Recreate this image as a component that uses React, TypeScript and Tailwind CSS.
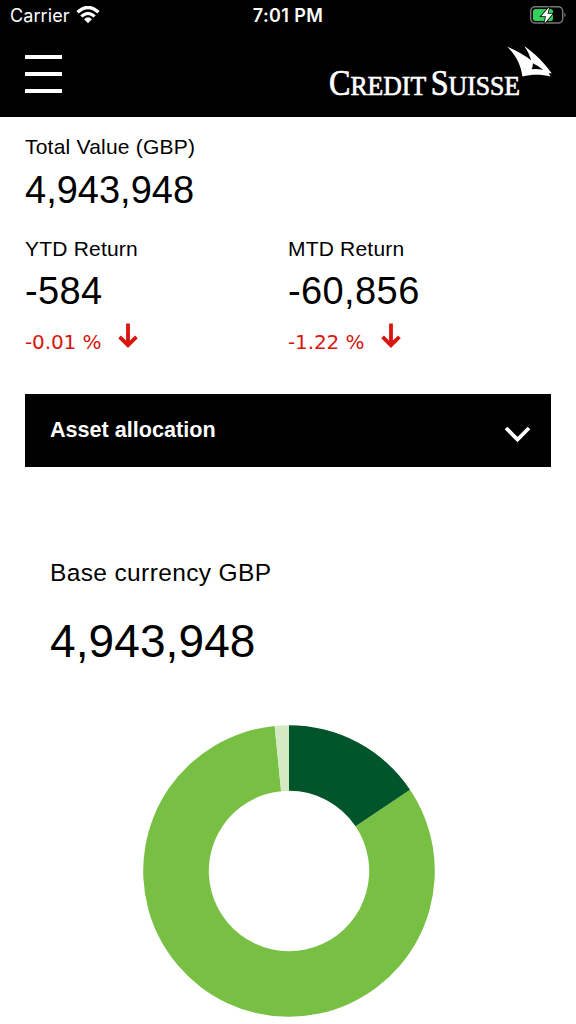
const SANS = "font-['Liberation_Sans',Arial,sans-serif]";

function StatusBar() {
  return (
    <div className="grid h-8 grid-cols-3 items-center font-['Inter',sans-serif] text-white">
      <div className="flex items-center gap-[6px] pl-[10px]">
        <span className="text-[18px] leading-8 tracking-[0.1px]">Carrier</span>
        <svg width="24" height="18" viewBox="0 0 24 18" fill="none" stroke="white" className="-mt-[2px]">
          <path d="M1.5 6.2 Q12 -3.3 22.5 6.2" strokeWidth="3.4" />
          <path d="M5.3 10.4 Q12 4.3 18.7 10.4" strokeWidth="3.2" />
          <path d="M8.1 13.3 Q12 9.4 15.9 13.3 L12 17.3 Z" fill="white" stroke="none" />
        </svg>
      </div>
      <span className="text-center text-[18px] leading-8 font-semibold tracking-[0.4px]">7:01 PM</span>
      <div className="flex justify-end pr-[9px]">
        <svg width="38" height="20" viewBox="0 0 38 20">
          <rect x="1.7" y="0.7" width="32" height="16.4" rx="4.5" fill="none" stroke="#777" strokeWidth="1.5" />
          <path d="M35.4 6.5 Q38 8.9 35.4 11.3 Z" fill="#777" />
          <rect x="4" y="3" width="20" height="12" rx="2.5" fill="#32d15b" />
          <path d="M20.2 0.9 L12.2 10.2 H17 L15.4 17.5 L23.6 7.8 H18.6 Z" fill="white" stroke="black" strokeWidth="1.6" paintOrder="stroke" />
        </svg>
      </div>
    </div>
  );
}

function Logo() {
  return (
    <svg
      width="228"
      height="60"
      viewBox="326 43 228 60"
      fill="white"
      className="overflow-visible font-['Liberation_Serif',serif]"
    >
      <text x="329" y="95" fontSize="28" textLength="191" lengthAdjust="spacingAndGlyphs" stroke="white" strokeWidth="0.7">
        <tspan fontSize="35">C</tspan>
        <tspan>REDIT</tspan>
        <tspan fontSize="35" dx="5">S</tspan>
        <tspan>UISSE</tspan>
      </text>
      <path
        fillRule="evenodd"
        d="M507 46.5 Q521 52.5 531.2 60.2 Q529.2 53 524.3 46 C535 53.5 545.5 64 551.8 73.6 L548.6 73 L550.6 76.6 C541 74.2 532 74.2 522.4 76.6 C521 65 516 55 507 46.5 Z M532.8 63.2 Q533 66.6 531.6 69.3 Q537.5 68.7 543.2 69.9 Q539 66 532.8 63.2 Z"
      />
    </svg>
  );
}

function Header() {
  return (
    <header className="h-[116.5px] bg-black">
      <StatusBar />
      <div className="flex justify-between pt-[11px] pr-[22px] pl-[24.5px]">
        <button aria-label="Menu" className="mt-[12px] flex h-[38px] w-[37.5px] flex-col justify-between">
          <span className="h-[4px] w-full bg-white" />
          <span className="h-[4px] w-full bg-white" />
          <span className="h-[4px] w-full bg-white" />
        </button>
        <Logo />
      </div>
    </header>
  );
}

function DownArrow() {
  return (
    <svg width="20" height="26" viewBox="0 0 20 26" fill="none" stroke="#d9150f" strokeWidth="3.8">
      <path d="M10 0.5 V22.5 M1.6 13.8 L10 22.2 L18.4 13.8" />
    </svg>
  );
}

function ReturnFigure({ label, value, percent }: { label: string; value: string; percent: string }) {
  return (
    <div className="w-[263px]">
      <div className="text-[21px] leading-[26px] tracking-[0.2px]">{label}</div>
      <div className="mt-[7px] text-[38px] leading-[44px] tracking-[0.4px]">{value}</div>
      <div className="mt-[10px] flex h-[30px] gap-[17px] text-[#d9150f]">
        <span className="mt-[6px] font-['DejaVu_Sans',Verdana,sans-serif] text-[20px] leading-[26px] tracking-[-0.1px]">
          {percent}
        </span>
        <DownArrow />
      </div>
    </div>
  );
}

const CX = 146;
const CY = 146;
const OUTER = 145.8;
const INNER = 80.2;

function point(radius: number, degrees: number) {
  const a = (degrees * Math.PI) / 180;
  return `${CX + radius * Math.sin(a)} ${CY - radius * Math.cos(a)}`;
}

function slice(from: number, to: number) {
  const large = to - from > 180 ? 1 : 0;
  return `M${point(OUTER, from)} A${OUTER} ${OUTER} 0 ${large} 1 ${point(OUTER, to)} L${point(INNER, to)} A${INNER} ${INNER} 0 ${large} 0 ${point(INNER, from)} Z`;
}

function AllocationChart() {
  return (
    <svg width="292" height="292" viewBox="0 0 292 292">
      <path d={slice(56.1, 354.35)} fill="#78c043" />
      <path d={slice(354.35, 360)} fill="#d3eac2" />
      <path d={slice(0, 56.1)} fill="#00552b" />
    </svg>
  );
}

export default function App() {
  return (
    <div className={`h-[1024px] w-[576px] overflow-hidden bg-white text-black ${SANS}`}>
      <Header />
      <main className="px-[25px]">
        <div className="pt-[17.5px] text-[21px] leading-[26px] tracking-[0.22px]">Total Value (GBP)</div>
        <div className="mt-[8px] text-[38px] leading-[44px]">4,943,948</div>
        <div className="mt-[24px] flex">
          <ReturnFigure label="YTD Return" value="-584" percent="-0.01 %" />
          <ReturnFigure label="MTD Return" value="-60,856" percent="-1.22 %" />
        </div>
        <button className="mt-[41px] flex h-[73px] w-[526px] items-center justify-between bg-black pr-[20px] pl-[25px] text-white">
          <span className="-mt-[2px] text-[21.6px] leading-[26px] font-bold">Asset allocation</span>
          <svg width="27" height="18" viewBox="0 0 27 18" fill="none" stroke="white" strokeWidth="3.8" className="mt-[6px]">
            <path d="M2 3 L13.5 14.5 L25 3" />
          </svg>
        </button>
        <section className="px-[25px] pt-[91px]">
          <div className="text-[24.5px] leading-[30px] tracking-[0.37px]">Base currency GBP</div>
          <div className="mt-[25px] text-[46px] leading-[56px] tracking-[0.1px]">4,943,948</div>
          <div className="mt-[56px] flex justify-center pl-[1px]">
            <AllocationChart />
          </div>
        </section>
      </main>
    </div>
  );
}
